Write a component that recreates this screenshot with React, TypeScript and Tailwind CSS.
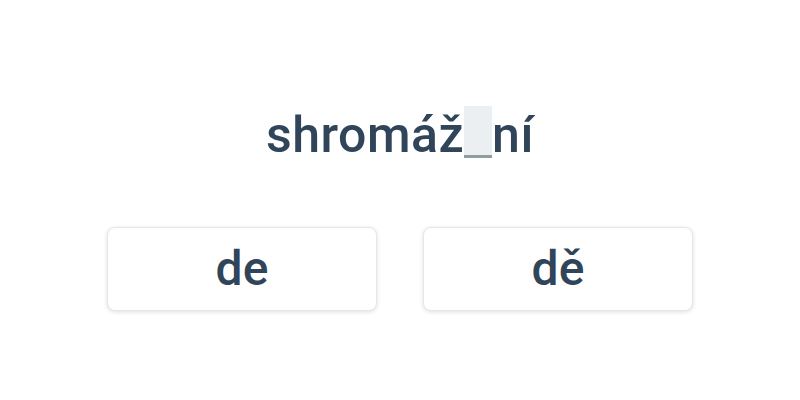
import React from "react";

const options = ["de", "dě"];

function OptionButton({ label }: { label: string }) {
  return (
    <button className="w-[270px] h-[84px] rounded-lg bg-white border border-[#e4e6e9] shadow-[0_1px_4px_rgba(0,0,0,0.13)] text-[48px] font-medium text-[#304559] leading-none flex items-center justify-center">
      {label}
    </button>
  );
}

export default function App() {
  return (
    <div
      className="w-[800px] h-[400px] bg-white flex flex-col items-center pt-[106px]"
      style={{ fontFamily: "Roboto, 'Noto Sans', sans-serif" }}
    >
      <div className="h-[52px] flex items-end text-[50px] font-medium text-[#304559] leading-none tracking-[0.5px]">
        <span className="mb-[-2px]">shromáž</span>
        <span className="inline-block w-[28px] h-[52px] bg-[#eceff1] border-b-[3px] border-[#8e9e9e]" />
        <span className="mb-[-2px]">ní</span>
      </div>
      <div className="mt-[69px] flex gap-[46px]">
        {options.map((o) => (
          <OptionButton key={o} label={o} />
        ))}
      </div>
    </div>
  );
}
